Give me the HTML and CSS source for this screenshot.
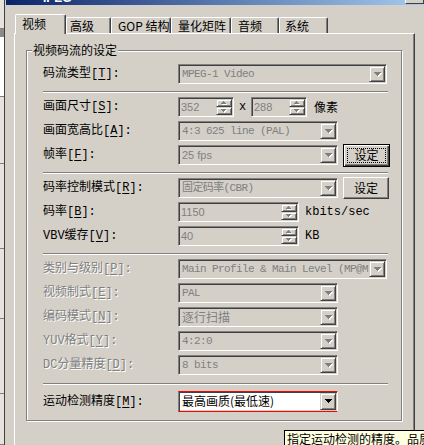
FILE: index.html
```html
<!DOCTYPE html>
<html lang="zh-CN">
<head>
    <meta charset="UTF-8">
    <title>视频设定</title>
    <link rel="stylesheet" href="styles.css">
</head>
<body>
    <div class="screen">
        <div class="behind">
            <div class="band" style="height:28px"></div>
            <div class="band dark" style="height:9px"></div>
            <div class="band white" style="height:59px"></div>
            <div class="band" style="height:68px"></div>
            <div class="band" style="height:85px"></div>
            <div class="band" style="height:70px"></div>
            <div class="band" style="height:75px"></div>
            <div class="band" style="height:51px"></div>
        </div>

        <div class="dialog">
            <div class="titlebar">
                <span class="title">IPEG</span>
                <span class="tb-btn"></span>
            </div>

            <div class="tabs">
                <div class="tab active">视频</div>
                <div class="tab t-adv">高级</div>
                <div class="tab t-gop">GOP 结构</div>
                <div class="tab t-quant">量化矩阵</div>
                <div class="tab t-audio">音频</div>
                <div class="tab t-sys">系统</div>
            </div>

            <div class="panel">
                <div class="group">
                    <div class="legend">视频码流的设定</div>

                    <div class="row first">
                        <span class="label">码流类型[<u>T</u>]:</span>
                        <div class="combo wide">
                            <span class="val">MPEG-1 Video</span>
                            <span class="drop"><svg class="arr" width="8" height="5" viewBox="0 0 8 5"><path class="hl" transform="translate(1 1)" d="M0 0h7v1H0zM1 1h5v1H1zM2 2h3v1H2zM3 3h1v1H3z"/><path d="M0 0h7v1H0zM1 1h5v1H1zM2 2h3v1H2zM3 3h1v1H3z"/></svg></span>
                        </div>
                    </div>

                    <div class="sep"></div>

                    <div class="row">
                        <span class="label">画面尺寸[<u>S</u>]:</span>
                        <div class="spin">
                            <span class="num">352</span>
                            <span class="ud">
                                <b><svg class="arr" width="6" height="4" viewBox="0 0 6 4"><path class="hl" transform="translate(1 1)" d="M2 0h1v1H2zM1 1h3v1H1zM0 2h5v1H0z"/><path d="M2 0h1v1H2zM1 1h3v1H1zM0 2h5v1H0z"/></svg></b>
                                <b><svg class="arr" width="6" height="4" viewBox="0 0 6 4"><path class="hl" transform="translate(1 1)" d="M0 0h5v1H0zM1 1h3v1H1zM2 2h1v1H2z"/><path d="M0 0h5v1H0zM1 1h3v1H1zM2 2h1v1H2z"/></svg></b>
                            </span>
                        </div>
                        <span class="by">x</span>
                        <div class="spin">
                            <span class="num">288</span>
                            <span class="ud">
                                <b><svg class="arr" width="6" height="4" viewBox="0 0 6 4"><path class="hl" transform="translate(1 1)" d="M2 0h1v1H2zM1 1h3v1H1zM0 2h5v1H0z"/><path d="M2 0h1v1H2zM1 1h3v1H1zM0 2h5v1H0z"/></svg></b>
                                <b><svg class="arr" width="6" height="4" viewBox="0 0 6 4"><path class="hl" transform="translate(1 1)" d="M0 0h5v1H0zM1 1h3v1H1zM2 2h1v1H2z"/><path d="M0 0h5v1H0zM1 1h3v1H1zM2 2h1v1H2z"/></svg></b>
                            </span>
                        </div>
                        <span class="unit">像素</span>
                    </div>

                    <div class="row">
                        <span class="label">画面宽高比[<u>A</u>]:</span>
                        <div class="combo">
                            <span class="val">4:3 625 line (PAL)</span>
                            <span class="drop"><svg class="arr" width="8" height="5" viewBox="0 0 8 5"><path class="hl" transform="translate(1 1)" d="M0 0h7v1H0zM1 1h5v1H1zM2 2h3v1H2zM3 3h1v1H3z"/><path d="M0 0h7v1H0zM1 1h5v1H1zM2 2h3v1H2zM3 3h1v1H3z"/></svg></span>
                        </div>
                    </div>

                    <div class="row">
                        <span class="label">帧率[<u>F</u>]:</span>
                        <div class="combo">
                            <span class="val sans">25 fps</span>
                            <span class="drop"><svg class="arr" width="8" height="5" viewBox="0 0 8 5"><path class="hl" transform="translate(1 1)" d="M0 0h7v1H0zM1 1h5v1H1zM2 2h3v1H2zM3 3h1v1H3z"/><path d="M0 0h7v1H0zM1 1h5v1H1zM2 2h3v1H2zM3 3h1v1H3z"/></svg></span>
                        </div>
                        <div class="btn def"><span class="focus">设定</span></div>
                    </div>

                    <div class="sep"></div>

                    <div class="row">
                        <span class="label">码率控制模式[<u>R</u>]:</span>
                        <div class="combo">
                            <span class="val">固定码率(CBR)</span>
                            <span class="drop"><svg class="arr" width="8" height="5" viewBox="0 0 8 5"><path class="hl" transform="translate(1 1)" d="M0 0h7v1H0zM1 1h5v1H1zM2 2h3v1H2zM3 3h1v1H3z"/><path d="M0 0h7v1H0zM1 1h5v1H1zM2 2h3v1H2zM3 3h1v1H3z"/></svg></span>
                        </div>
                        <div class="btn">设定</div>
                    </div>

                    <div class="row">
                        <span class="label">码率[<u>B</u>]:</span>
                        <div class="spin long">
                            <span class="num">1150</span>
                            <span class="ud">
                                <b><svg class="arr" width="6" height="4" viewBox="0 0 6 4"><path class="hl" transform="translate(1 1)" d="M2 0h1v1H2zM1 1h3v1H1zM0 2h5v1H0z"/><path d="M2 0h1v1H2zM1 1h3v1H1zM0 2h5v1H0z"/></svg></b>
                                <b><svg class="arr" width="6" height="4" viewBox="0 0 6 4"><path class="hl" transform="translate(1 1)" d="M0 0h5v1H0zM1 1h3v1H1zM2 2h1v1H2z"/><path d="M0 0h5v1H0zM1 1h3v1H1zM2 2h1v1H2z"/></svg></b>
                            </span>
                        </div>
                        <span class="unit mono">kbits/sec</span>
                    </div>

                    <div class="row">
                        <span class="label">VBV缓存[<u>V</u>]:</span>
                        <div class="spin long">
                            <span class="num">40</span>
                            <span class="ud">
                                <b><svg class="arr" width="6" height="4" viewBox="0 0 6 4"><path class="hl" transform="translate(1 1)" d="M2 0h1v1H2zM1 1h3v1H1zM0 2h5v1H0z"/><path d="M2 0h1v1H2zM1 1h3v1H1zM0 2h5v1H0z"/></svg></b>
                                <b><svg class="arr" width="6" height="4" viewBox="0 0 6 4"><path class="hl" transform="translate(1 1)" d="M0 0h5v1H0zM1 1h3v1H1zM2 2h1v1H2z"/><path d="M0 0h5v1H0zM1 1h3v1H1zM2 2h1v1H2z"/></svg></b>
                            </span>
                        </div>
                        <span class="unit mono">KB</span>
                    </div>

                    <div class="sep"></div>

                    <div class="row">
                        <span class="label off">类别与级别[<u>P</u>]:</span>
                        <div class="combo wide">
                            <span class="val">Main Profile &amp; Main Level (MP@ML)</span>
                            <span class="drop"><svg class="arr" width="8" height="5" viewBox="0 0 8 5"><path class="hl" transform="translate(1 1)" d="M0 0h7v1H0zM1 1h5v1H1zM2 2h3v1H2zM3 3h1v1H3z"/><path d="M0 0h7v1H0zM1 1h5v1H1zM2 2h3v1H2zM3 3h1v1H3z"/></svg></span>
                        </div>
                    </div>

                    <div class="row">
                        <span class="label off">视频制式[<u>E</u>]:</span>
                        <div class="combo">
                            <span class="val">PAL</span>
                            <span class="drop"><svg class="arr" width="8" height="5" viewBox="0 0 8 5"><path class="hl" transform="translate(1 1)" d="M0 0h7v1H0zM1 1h5v1H1zM2 2h3v1H2zM3 3h1v1H3z"/><path d="M0 0h7v1H0zM1 1h5v1H1zM2 2h3v1H2zM3 3h1v1H3z"/></svg></span>
                        </div>
                    </div>

                    <div class="row">
                        <span class="label off">编码模式[<u>N</u>]:</span>
                        <div class="combo">
                            <span class="val cjk">逐行扫描</span>
                            <span class="drop"><svg class="arr" width="8" height="5" viewBox="0 0 8 5"><path class="hl" transform="translate(1 1)" d="M0 0h7v1H0zM1 1h5v1H1zM2 2h3v1H2zM3 3h1v1H3z"/><path d="M0 0h7v1H0zM1 1h5v1H1zM2 2h3v1H2zM3 3h1v1H3z"/></svg></span>
                        </div>
                    </div>

                    <div class="row">
                        <span class="label off">YUV格式[<u>Y</u>]:</span>
                        <div class="combo">
                            <span class="val">4:2:0</span>
                            <span class="drop"><svg class="arr" width="8" height="5" viewBox="0 0 8 5"><path class="hl" transform="translate(1 1)" d="M0 0h7v1H0zM1 1h5v1H1zM2 2h3v1H2zM3 3h1v1H3z"/><path d="M0 0h7v1H0zM1 1h5v1H1zM2 2h3v1H2zM3 3h1v1H3z"/></svg></span>
                        </div>
                    </div>

                    <div class="row">
                        <span class="label off">DC分量精度[<u>D</u>]:</span>
                        <div class="combo">
                            <span class="val">8 bits</span>
                            <span class="drop"><svg class="arr" width="8" height="5" viewBox="0 0 8 5"><path class="hl" transform="translate(1 1)" d="M0 0h7v1H0zM1 1h5v1H1zM2 2h3v1H2zM3 3h1v1H3z"/><path d="M0 0h7v1H0zM1 1h5v1H1zM2 2h3v1H2zM3 3h1v1H3z"/></svg></span>
                        </div>
                    </div>

                    <div class="sep last"></div>

                    <div class="row motion">
                        <span class="label">运动检测精度[<u>M</u>]:</span>
                        <div class="combo on">
                            <span class="val cjk">最高画质(最低速)</span>
                            <span class="drop"><svg class="arr" width="8" height="5" viewBox="0 0 8 5"><path d="M0 0h7v1H0zM1 1h5v1H1zM2 2h3v1H2zM3 3h1v1H3z"/></svg></span>
                        </div>
                    </div>
                </div>
            </div>
        </div>

        <div class="tip">指定运动检测的精度。品质越高速度越慢</div>
    </div>
</body>
</html>
```

FILE: styles.css
```css
body {
    margin: 0;
    background: #d4d0c8;
    font: 12px/14px "Liberation Mono", "Noto Sans CJK SC", monospace;
    color: #000;
    overflow: hidden;
}
.screen {
    position: relative;
    display: flex;
    width: 424px;
    height: 445px;
    overflow: hidden;
}

/* window underneath, only its right edge shows */
.behind {
    width: 4px;
    border-right: 1px solid #404040;
    display: flex;
    flex-direction: column;
}
.band {
    border-bottom: 1px solid #808080;
    background: #e6e3de;
}
.band.dark { background: #8c8a86; border-bottom: 0; }
.band.white { background: #fff; }

.dialog {
    flex: 1;
    min-width: 0;
    display: flex;
    flex-direction: column;
}
.titlebar {
    height: 5px;
    margin-left: 1px;
    display: flex;
    overflow: hidden;
    background: linear-gradient(to right, #0a246a, #a6caf0);
}
.title {
    margin: -9px 0 0 37px;
    color: #fff;
    font: bold 12px/14px "Liberation Sans", sans-serif;
}
.tb-btn {
    margin-left: auto;
    width: 17px;
    height: 3px;
    background: #d4d0c8;
    border: 1px solid;
    border-color: #fff #404040 #404040 #fff;
    border-top: 0;
}

/* tab strip */
.tabs {
    display: flex;
    align-items: flex-end;
    padding: 9px 0 0 10px;
    font-family: "Noto Sans CJK SC", sans-serif;
}
.tab {
    box-sizing: border-box;
    height: 16px;
    line-height: 15px;
    padding-left: 6px;
    border: 1px solid;
    border-color: #fff #404040 transparent #fff;
    border-bottom: 0;
    border-radius: 2px 2px 0 0;
    box-shadow: inset -1px 0 #808080;
    white-space: nowrap;
}
.tab.active {
    position: relative;
    z-index: 1;
    width: 51px;
    height: 20px;
    line-height: 17px;
    margin-bottom: -1px;
    background: #d4d0c8;
}
.t-adv { width: 45px; padding-left: 3px; }
.t-gop { width: 60px; }
.t-gop, .t-quant { width: 60px; }
.t-audio { width: 48px; }
.t-sys { width: 49px; padding-left: 5px; }

.panel {
    flex: 1;
    box-sizing: border-box;
    width: 401px;
    margin-left: 9px;
    padding: 16px 12px 0 11px;
    border-style: solid;
    border-width: 1px 1px 0 1px;
    border-color: #fff #404040 transparent #fff;
    box-shadow: inset -1px 0 #808080;
}

/* etched group box */
.group {
    display: flex;
    flex-direction: column;
    padding: 0 13px 8px 16px;
    border: 1px solid #808080;
    box-shadow: inset 1px 1px #fff, 1px 1px #fff;
}
.legend {
    align-self: flex-start;
    height: 12px;
    margin: -7px 0 0 -11px;
    padding: 0 1px;
    line-height: 12px;
    background: #d4d0c8;
    font-family: "Noto Sans CJK SC", sans-serif;
}
.row {
    display: flex;
    align-items: center;
    height: 20px;
    margin-top: 4px;
}
.row.first { margin-top: 8px; }
.row.motion { height: 21px; margin-top: 6px; }
.sep {
    height: 1px;
    margin-top: 7px;
    border-top: 1px solid #808080;
    background: #fff;
}
.sep.last { margin-top: 8px; }

.label {
    flex: none;
    width: 135px;
    white-space: nowrap;
}
.label u { text-underline-offset: 2px; }
.label.off {
    color: #808080;
    text-shadow: 1px 1px 0 #fff;
}

/* sunken controls */
.combo, .spin {
    flex: none;
    box-sizing: border-box;
    display: flex;
    height: 20px;
    padding: 1px;
    border: 1px solid;
    border-color: #808080 #fff #fff #808080;
    box-shadow: inset 1px 1px #404040, inset -1px -1px #d4d0c8;
    background: #d4d0c8;
}
.combo { width: 160px; }
.combo.wide { width: 209px; }
.combo.on {
    height: 21px;
    background: #fff;
    border-top-color: #f00;
    border-bottom-color: #f00;
}
.spin { width: 56px; }
.spin.long { width: 121px; }

.val {
    flex: 1;
    min-width: 0;
    overflow: hidden;
    white-space: nowrap;
    padding-left: 2px;
    color: #808080;
    font-size: 11px;
    line-height: 16px;
    letter-spacing: -0.6px;
}
.val.sans {
    font-family: "Liberation Sans", sans-serif;
    letter-spacing: 0;
}
.val.cjk {
    font-family: "Noto Sans CJK SC", sans-serif;
    font-size: 12px;
    letter-spacing: 0;
}
.combo.on .val { color: #000; }
.num {
    flex: 1;
    padding-left: 1px;
    color: #808080;
    font: 11px/16px "Liberation Sans", sans-serif;
}

/* raised buttons */
.drop, .ud b {
    box-sizing: border-box;
    display: flex;
    align-items: center;
    justify-content: center;
    border: 1px solid;
    border-color: #d4d0c8 #404040 #404040 #d4d0c8;
    box-shadow: inset 1px 1px #fff, inset -1px -1px #808080;
    background: #d4d0c8;
}
.drop {
    flex: none;
    width: 16px;
    padding-left: 1px;
}
.ud {
    flex: none;
    display: flex;
    flex-direction: column;
    width: 16px;
}
.ud b { flex: 1; }
.arr { display: block; }
.arr path { fill: #808080; }
.arr .hl { fill: #fff; }
.combo.on .arr path { fill: #000; }

.by {
    width: 17px;
    text-align: center;
}
.unit {
    margin-left: 7px;
    font-family: "Noto Sans CJK SC", sans-serif;
}
.unit.mono {
    margin-left: 6px;
    font-family: "Liberation Mono", monospace;
}

.btn {
    flex: none;
    box-sizing: border-box;
    display: flex;
    align-items: center;
    justify-content: center;
    width: 46px;
    height: 22px;
    margin-left: 5px;
    border: 1px solid;
    border-color: #fff #404040 #404040 #fff;
    box-shadow: inset -1px -1px #808080;
    font-family: "Noto Sans CJK SC", sans-serif;
}
.btn.def {
    align-items: stretch;
    width: 47px;
    height: 23px;
    padding: 3px;
    border-color: #000;
    box-shadow: inset 1px 1px #fff, inset -1px -1px #404040, inset -2px -2px #808080;
}
.btn .focus {
    flex: 1;
    display: flex;
    align-items: center;
    justify-content: center;
    border: 1px dotted #000;
}

/* tooltip over the corner */
.tip {
    position: absolute;
    left: 284px;
    top: 430px;
    padding: 1px 2px 3px;
    border: 1px solid #000;
    background: #ffffe1;
    white-space: nowrap;
    font: 12px/14px "Noto Sans CJK SC", sans-serif;
}
```
